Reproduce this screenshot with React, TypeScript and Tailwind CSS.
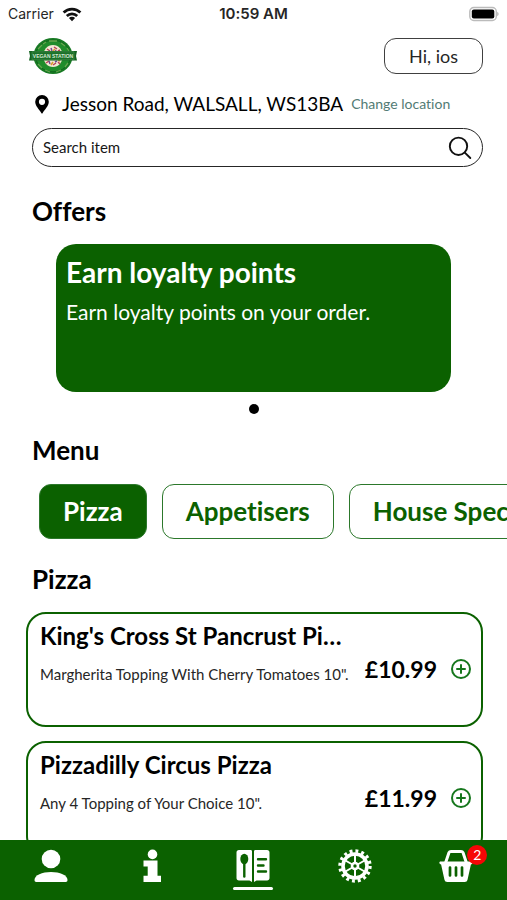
import React, { useState } from 'react';

interface MenuItem {
  id: number;
  name: string;
  description: string;
  price: string;
}

const categories = ['Pizza', 'Appetisers', 'House Specials'];

const items: MenuItem[] = [
  { id: 1, name: "King's Cross St Pancrust Pizza", description: 'Margherita Topping With Cherry Tomatoes 10".', price: '£10.99' },
  { id: 2, name: 'Pizzadilly Circus Pizza', description: 'Any 4 Topping of Your Choice 10".', price: '£11.99' },
];

const StatusBar = () => (
  <div className="grid grid-cols-3 items-center h-7 px-2 shrink-0 font-[Inter,sans-serif] text-sm text-neutral-800">
    <div className="flex items-center gap-2">
      <span>Carrier</span>
      <svg viewBox="0 0 20 15" className="w-5 h-[15px]" fill="none" stroke="#111" strokeWidth="2.7">
        <path d="M1.6 5.500a12 12 0 0 1 16.8 0" />
        <path d="M4.800 9a7.400 7.400 0 0 1 10.400 0" />
        <path d="M10 14.200 6.900 11.100a4.400 4.400 0 0 1 6.200 0Z" fill="#111" stroke="none" />
      </svg>
    </div>
    <span className="text-center text-[15px] font-semibold whitespace-nowrap">10:59 AM</span>
    <svg viewBox="0 0 30 16" className="w-[30px] h-4 justify-self-end">
      <rect x="0.8" y="1.500" width="26.500" height="13" rx="4" fill="#fff" stroke="#bbb" strokeWidth="1.400" />
      <rect x="2.800" y="3.500" width="22.500" height="9" rx="2" fill="#000" />
      <path d="M28.300 5.800v4.400c1.700-.7 1.700-3.700 0-4.400Z" fill="#aaa" />
    </svg>
  </div>
);

const Logo = () => (
  <svg viewBox="0 0 48 38" className="w-12 h-[38px]">
    <ellipse cx="24" cy="19" rx="19.500" ry="18" fill="#187a24" />
    <ellipse cx="24" cy="19" rx="17.300" ry="15.800" fill="#208c2b" stroke="#0c5c18" strokeWidth="0.700" />
    <path d="M9 12l4-4M14 7l3-2M20 4h8M32 6l4 3M38 11l2 3M9 27l4 4M16 33l5 2M27 35l5-2M36 30l3-4" stroke="#65a64e" strokeWidth="1.300" />
    <ellipse cx="24" cy="19" rx="10" ry="11" fill="#f3e8d4" />
    <g strokeWidth="1.500">
      <path d="M18 12l3 2M25 10l3 2M29 14l2-1M17 26l3-2M24 28l3-2M29 25l2 2" stroke="#b84355" />
      <path d="M22 11l1 3M19 15l2-1M27 13l-1 2M21 27l-1-3M28 24l-2 1" stroke="#6d4c91" />
      <path d="M24 14l2-2M24 25l-2 3M31 24l-2-1" stroke="#d99a2b" />
    </g>
    <path d="M0 14h48l-1 5 1 4.500H0l1-4.500z" fill="#126320" />
    <path d="M3 14.800h42v8H3z" fill="#1b7029" stroke="#579c5c" strokeWidth="0.500" />
    <text x="24" y="20.800" textAnchor="middle" fontFamily="Liberation Sans, sans-serif" fontSize="5" fontWeight="700" fill="#d5e8d2">VEGAN STATION</text>
  </svg>
);

const ProfileIcon = () => (
  <svg viewBox="0 0 34 34" className="w-[34px] h-[34px]" fill="white">
    <circle cx="17" cy="10" r="9.300" />
    <path d="M.5 31c0-4.800 7.600-8 16.500-8s16.500 3.200 16.500 8c0 1.200-.5 2-1.800 2H2.300C1 33 .5 32.200.5 31z" />
  </svg>
);

const InfoIcon = () => (
  <svg viewBox="0 0 34 34" className="w-[34px] h-[34px]" fill="white">
    <circle cx="17.500" cy="5.400" r="4.800" />
    <path d="M8.500 11.500h14v15.300H26V33H8.500v-6.200h4.200v-9.300H8.500z" />
  </svg>
);

const MenuIcon = () => (
  <svg viewBox="0 0 34 34" className="w-[34px] h-[34px]">
    <path d="M3 1h11.500c1 0 1.500.5 1.500 1.500V33l-2.500-1.500H3c-1.600 0-2.500-.9-2.500-2.500V3.500C.5 1.900 1.400 1 3 1z" fill="white" />
    <path d="M19.500 1H31c1.600 0 2.500.9 2.500 2.500V29c0 1.600-.9 2.500-2.500 2.500H20.500L18 33V2.500c0-1 .5-1.500 1.500-1.500z" fill="white" />
    <ellipse cx="8.300" cy="10" rx="4" ry="5.300" fill="#0b6100" />
    <path d="M8.300 13v14.500" stroke="#0b6100" strokeWidth="2.400" strokeLinecap="round" />
    <path d="M22 10.200h8M22 16.500h5.500M22 22.500h8" stroke="#0b6100" strokeWidth="2.400" strokeLinecap="round" />
  </svg>
);

const SettingsIcon = () => (
  <svg viewBox="0 0 34 34" className="w-[34px] h-[34px]" fill="none" stroke="white">
    <circle cx="17" cy="17" r="15" strokeWidth="3.400" strokeDasharray="2.900 2.990" />
    <circle cx="17" cy="17" r="12" strokeWidth="3.600" />
    <path d="M17 14V6M19.600 15.500l7-4M19.600 18.500l7 4M17 20v8M14.400 18.500l-7 4M14.400 15.500l-7-4" strokeWidth="2" />
    <circle cx="17" cy="17" r="3" strokeWidth="2.600" />
  </svg>
);

const BasketIcon = () => (
  <svg viewBox="0 0 34 34" className="w-[34px] h-[34px]">
    <path d="M6.500 14 10 3.500Q10.500 2.400 12 2.400h10q1.500 0 2 1.100L27.500 14" fill="none" stroke="white" strokeWidth="3" />
    <path d="M1.700 12.500h30.600c1 0 1.500.6 1.300 1.600-.2.900-.8 1.300-1.700 1.400l-3.300 15c-.4 1.700-1.300 2.500-3 2.500H8.400c-1.700 0-2.600-.8-3-2.500l-3.300-15c-.9-.1-1.500-.5-1.700-1.400-.2-1 .3-1.600 1.300-1.600z" fill="white" />
    <path d="M11 18.500v8M17 18.500v8M23 18.500v8" stroke="#0b6100" strokeWidth="2.700" strokeLinecap="round" />
  </svg>
);

const navItems = [
  { label: 'Profile', icon: <ProfileIcon /> },
  { label: 'Information', icon: <InfoIcon /> },
  { label: 'Menu', icon: <MenuIcon /> },
  { label: 'Settings', icon: <SettingsIcon /> },
  { label: 'Basket', icon: <BasketIcon /> },
];

const ItemCard: React.FC<{ item: MenuItem; onAdd: () => void }> = ({ item, onAdd }) => (
  <article className="min-h-[115px] rounded-[20px] border-2 border-[#0b6100] pl-3 pr-2 pt-1 flex gap-4">
    <div className="flex-1 min-w-0">
      <h3 className="text-2xl leading-9 font-bold truncate">{item.name}</h3>
      <p className="mt-[10px] text-[15px] leading-5 text-neutral-800 whitespace-nowrap">{item.description}</p>
    </div>
    <div className="flex items-center gap-3 h-[102px] shrink-0">
      <span className="text-[23px] font-bold">{item.price}</span>
      <button aria-label={`Add ${item.name}`} onClick={onAdd}>
        <svg viewBox="0 0 24 24" className="w-6 h-6" fill="none" stroke="#16771d" strokeWidth="2" strokeLinecap="round">
          <circle cx="12" cy="12" r="9" />
          <path d="M12 8v8M8 12h8" />
        </svg>
      </button>
    </div>
  </article>
);

export default function App() {
  const [category, setCategory] = useState('Pizza');
  const [tab, setTab] = useState('Menu');
  const [query, setQuery] = useState('');
  const [count, setCount] = useState(2);

  return (
    <div className="h-screen flex flex-col bg-white text-black font-[Lato,sans-serif] [font-variant-ligatures:none] overflow-hidden">
      <StatusBar />

      <main className="flex-1 min-h-0 overflow-y-auto [scrollbar-width:none]">
        <header className="flex items-center justify-between pl-[29px] pr-6 pt-[9px]">
          <Logo />
          <button className="h-9 px-6 rounded-xl border border-neutral-700 text-lg leading-6 text-neutral-800">Hi, ios</button>
        </header>

        <div className="flex items-center h-6 mt-[17px] px-8">
          <svg viewBox="0 0 20 24" className="w-5 h-6 shrink-0" fill="#000">
            <path fillRule="evenodd" d="M10 3a6.800 6.800 0 0 0-6.800 6.800c0 4.500 4 7.300 6.100 11.200.4.700 1 .7 1.400 0 2.100-3.900 6.100-6.700 6.100-11.200A6.800 6.800 0 0 0 10 3zm0 3.700a3.100 3.100 0 1 1 0 6.200 3.100 3.100 0 0 1 0-6.200z" />
          </svg>
          <span className="ml-[10px] text-[19px] whitespace-nowrap">Jesson Road, WALSALL, WS13BA</span>
          <a href="#location" className="ml-2 text-sm text-[#527b74] whitespace-nowrap">Change location</a>
        </div>

        <label className="flex items-center h-[39px] mr-6 ml-8 mt-3 pl-[10px] pr-[10px] rounded-full border border-neutral-800">
          <input
            type="text"
            aria-label="Search item"
            placeholder="Search item"
            value={query}
            onChange={e => setQuery(e.target.value)}
            className="flex-1 min-w-0 text-[15px] outline-none placeholder:text-neutral-900"
          />
          <svg viewBox="0 0 24 24" className="w-6 h-6" fill="none" stroke="#111" strokeWidth="1.900" strokeLinecap="round">
            <circle cx="10.500" cy="10.300" r="8.700" />
            <path d="m16.800 16.600 5.500 5.400" />
          </svg>
        </label>

        <section>
          <h2 className="mt-7 px-8 text-[26px] leading-8 font-bold">Offers</h2>
          <div className="mt-[17px] mx-14 h-[148px] rounded-[20px] bg-[#0b6100] text-white px-[10px] pt-2">
            <h3 className="text-[28px] leading-10 font-bold">Earn loyalty points</h3>
            <p className="text-[21px] leading-10">Earn loyalty points on your order.</p>
          </div>
          <div className="mt-3 mx-auto size-[10px] rounded-full bg-black"></div>
        </section>

        <section>
          <h2 className="mt-5 px-8 text-[26px] leading-8 font-bold">Menu</h2>
          <div className="flex gap-[15px] mt-[18px] pl-[39px] overflow-x-auto [scrollbar-width:none]">
            {categories.map(name => (
              <button
                key={name}
                onClick={() => setCategory(name)}
                className={`h-[55px] px-[23px] rounded-xl border border-[#2c782b] text-[26px] font-bold whitespace-nowrap shrink-0 ${
                  category === name ? 'bg-[#0b6100] text-white' : 'bg-white text-[#0b6100]'
                }`}
              >
                {name}
              </button>
            ))}
          </div>
        </section>

        <section>
          <h2 className="mt-6 px-8 text-[26px] leading-8 font-bold">{category}</h2>
          <div className="flex flex-col gap-[14px] mt-[17px] px-[26px] pr-6">
            {items.map(item => (
              <ItemCard key={item.id} item={item} onAdd={() => setCount(c => c + 1)} />
            ))}
          </div>
        </section>
      </main>

      <nav className="grid grid-cols-5 h-[60px] shrink-0 bg-[#0b6100]">
        {navItems.map(({ label, icon }) => (
          <button key={label} aria-label={label} onClick={() => setTab(label)} className="flex flex-col items-center pt-[9px] gap-1">
            <span className="relative">
              {icon}
              {label === 'Basket' && (
                <span className="absolute -top-1 left-7 size-5 rounded-full bg-[#f60606] text-white text-sm leading-5">{count}</span>
              )}
            </span>
            {tab === label && <span className="w-10 h-[3px] rounded-full bg-white"></span>}
          </button>
        ))}
      </nav>
    </div>
  );
}
